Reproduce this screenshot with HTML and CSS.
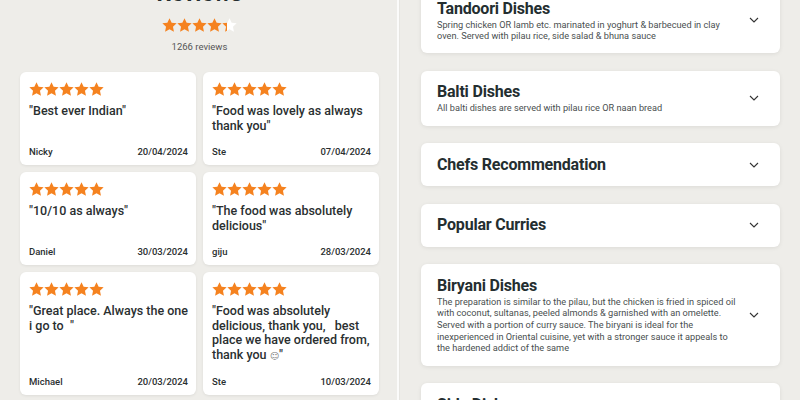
FILE: index.html
```html
<!DOCTYPE html>
<html lang="en">
<head>
<meta charset="utf-8">
<title>Reviews and menu</title>
<link rel="stylesheet" href="styles.css">
</head>
<body>
<svg class="defs" width="0" height="0" aria-hidden="true">
  <defs>
    <symbol id="star" viewBox="1.4 1.4 21.2 20.2"><path d="M12 1.6l3.1 6.6 7.2.9-5.3 5 1.4 7.2L12 17.7l-6.4 3.6L7 14.1l-5.3-5 7.2-.9z"/></symbol>
    <linearGradient id="part" x1="0" x2="1" y1="0" y2="0">
      <stop offset="0.3" stop-color="#f5821f"/>
      <stop offset="0.3" stop-color="#ffffff"/>
    </linearGradient>
  </defs>
</svg>
<div class="page">
  <section class="reviews">
    <h2 class="reviews-title">Reviews</h2>
    <div class="stars stars-head">
      <svg class="star"><use href="#star"/></svg>
      <svg class="star"><use href="#star"/></svg>
      <svg class="star"><use href="#star"/></svg>
      <svg class="star"><use href="#star"/></svg>
      <svg class="star star-part"><use href="#star"/></svg>
    </div>
    <p class="review-count">1266 reviews</p>
    <div class="review-grid">
      <article class="review">
        <div class="stars"><svg class="star"><use href="#star"/></svg><svg class="star"><use href="#star"/></svg><svg class="star"><use href="#star"/></svg><svg class="star"><use href="#star"/></svg><svg class="star"><use href="#star"/></svg></div>
        <p class="quote">"Best ever Indian"</p>
        <div class="review-foot"><span>Nicky</span><span>20/04/2024</span></div>
      </article>
      <article class="review">
        <div class="stars"><svg class="star"><use href="#star"/></svg><svg class="star"><use href="#star"/></svg><svg class="star"><use href="#star"/></svg><svg class="star"><use href="#star"/></svg><svg class="star"><use href="#star"/></svg></div>
        <p class="quote">"Food was lovely as always thank you"</p>
        <div class="review-foot"><span>Ste</span><span>07/04/2024</span></div>
      </article>
      <article class="review">
        <div class="stars"><svg class="star"><use href="#star"/></svg><svg class="star"><use href="#star"/></svg><svg class="star"><use href="#star"/></svg><svg class="star"><use href="#star"/></svg><svg class="star"><use href="#star"/></svg></div>
        <p class="quote">"10/10 as always"</p>
        <div class="review-foot"><span>Daniel</span><span>30/03/2024</span></div>
      </article>
      <article class="review">
        <div class="stars"><svg class="star"><use href="#star"/></svg><svg class="star"><use href="#star"/></svg><svg class="star"><use href="#star"/></svg><svg class="star"><use href="#star"/></svg><svg class="star"><use href="#star"/></svg></div>
        <p class="quote">"The food was absolutely delicious"</p>
        <div class="review-foot"><span>giju</span><span>28/03/2024</span></div>
      </article>
      <article class="review">
        <div class="stars"><svg class="star"><use href="#star"/></svg><svg class="star"><use href="#star"/></svg><svg class="star"><use href="#star"/></svg><svg class="star"><use href="#star"/></svg><svg class="star"><use href="#star"/></svg></div>
        <p class="quote">"Great place. Always the one i go to&nbsp; "</p>
        <div class="review-foot"><span>Michael</span><span>20/03/2024</span></div>
      </article>
      <article class="review">
        <div class="stars"><svg class="star"><use href="#star"/></svg><svg class="star"><use href="#star"/></svg><svg class="star"><use href="#star"/></svg><svg class="star"><use href="#star"/></svg><svg class="star"><use href="#star"/></svg></div>
        <p class="quote">"Food was absolutely delicious, thank you,&nbsp;&nbsp; best place we have ordered from, thank you <span class="smiley">☺</span>"</p>
        <div class="review-foot"><span>Ste</span><span>10/03/2024</span></div>
      </article>
    </div>
  </section>
  <div class="divider"></div>
  <section class="menu">
    <div class="category">
      <div class="cat-text">
        <h3 class="cat-title">Tandoori Dishes</h3>
        <p class="cat-desc">Spring chicken OR lamb etc. marinated in yoghurt &amp; barbecued in clay oven. Served with pilau rice, side salad &amp; bhuna sauce</p>
      </div>
      <svg class="chevron" viewBox="0 0 10 6"><path d="M1 1l4 4 4-4"/></svg>
    </div>
    <div class="category">
      <div class="cat-text">
        <h3 class="cat-title">Balti Dishes</h3>
        <p class="cat-desc">All balti dishes are served with pilau rice OR naan bread</p>
      </div>
      <svg class="chevron" viewBox="0 0 10 6"><path d="M1 1l4 4 4-4"/></svg>
    </div>
    <div class="category">
      <div class="cat-text">
        <h3 class="cat-title">Chefs Recommendation</h3>
      </div>
      <svg class="chevron" viewBox="0 0 10 6"><path d="M1 1l4 4 4-4"/></svg>
    </div>
    <div class="category">
      <div class="cat-text">
        <h3 class="cat-title">Popular Curries</h3>
      </div>
      <svg class="chevron" viewBox="0 0 10 6"><path d="M1 1l4 4 4-4"/></svg>
    </div>
    <div class="category">
      <div class="cat-text">
        <h3 class="cat-title">Biryani Dishes</h3>
        <p class="cat-desc">The preparation is similar to the pilau, but the chicken is fried in spiced oil with coconut, sultanas, peeled almonds &amp; garnished with an omelette. Served with a portion of curry sauce. The biryani is ideal for the inexperienced in Oriental cuisine, yet with a stronger sauce it appeals to the hardened addict of the same</p>
      </div>
      <svg class="chevron" viewBox="0 0 10 6"><path d="M1 1l4 4 4-4"/></svg>
    </div>
    <div class="category">
      <div class="cat-text">
        <h3 class="cat-title">Side Dishes</h3>
      </div>
      <svg class="chevron" viewBox="0 0 10 6"><path d="M1 1l4 4 4-4"/></svg>
    </div>
  </section>
</div>
</body>
</html>
```

FILE: styles.css
```css
* { box-sizing: border-box; }
html, body {
  margin: 0;
  padding: 0;
  width: 800px;
  height: 400px;
  overflow: hidden;
  background: #eeede9;
  font-family: Roboto, "Noto Sans", sans-serif;
  color: #242e30;
}
.defs { position: absolute; width: 0; height: 0; }
.page {
  display: flex;
  height: 400px;
  overflow: hidden;
}
.reviews {
  width: 397px;
  flex: none;
  padding: 0 18px 0 20px;
}
.divider {
  width: 3px;
  flex: none;
  background: #fbfbfa;
  border-right: 1px solid #e6e5e1;
}
.menu {
  flex: 1;
  padding: 0 20px 0 21px;
  margin-top: -13px;
  display: flex;
  flex-direction: column;
  gap: 17.5px;
}
.reviews-title {
  margin: -19px 0 0;
  font-size: 23px;
  line-height: 26px;
  font-weight: 700;
  text-align: center;
}
.stars {
  display: flex;
  height: 14px;
}
.stars-head {
  justify-content: center;
  margin-top: 11px;
}
.star {
  width: 15px;
  height: 14px;
  fill: #f5821f;
  flex: none;
}
.star-part { fill: url(#part); }
.review-count {
  margin: 9px 0 0;
  font-size: 9.5px;
  line-height: 12px;
  text-align: center;
  color: #555;
}
.review-grid {
  margin-top: 19px;
  display: grid;
  grid-template-columns: 1fr 1fr;
  gap: 7px;
}
.review {
  background: #fff;
  border-radius: 6px;
  box-shadow: 0 1px 3px rgba(0, 0, 0, 0.07);
  padding: 10px 8px 7px 9px;
  display: flex;
  flex-direction: column;
}
.quote {
  margin: 8px 0 13px;
  font-size: 12.5px;
  line-height: 14.5px;
  font-weight: 500;
  color: #2a2f30;
  flex: 1;
}
.smiley { font-size: 9px; color: #777; font-family: "DejaVu Sans", sans-serif; }
.review-foot {
  display: flex;
  justify-content: space-between;
  font-size: 9.5px;
  line-height: 12px;
  font-weight: 500;
  color: #2a2f30;
}
.category {
  background: #fff;
  border-radius: 6px;
  box-shadow: 0 1px 4px rgba(0, 0, 0, 0.08);
  padding: 11.5px 21px 11.5px 16px;
  display: flex;
  align-items: center;
  gap: 12px;
  flex: none;
}
.cat-text { flex: 1; max-width: 300px; }
.cat-title {
  margin: 0;
  font-size: 16px;
  line-height: 20px;
  font-weight: 700;
  letter-spacing: -0.2px;
  color: #242e30;
}
.cat-desc {
  margin: 0;
  font-size: 9.2px;
  line-height: 11.7px;
  color: #4a4f50;
}
.chevron {
  width: 10px;
  height: 6px;
  margin-left: auto;
  fill: none;
  stroke: #333;
  stroke-width: 1.1;
  flex: none;
}
```
